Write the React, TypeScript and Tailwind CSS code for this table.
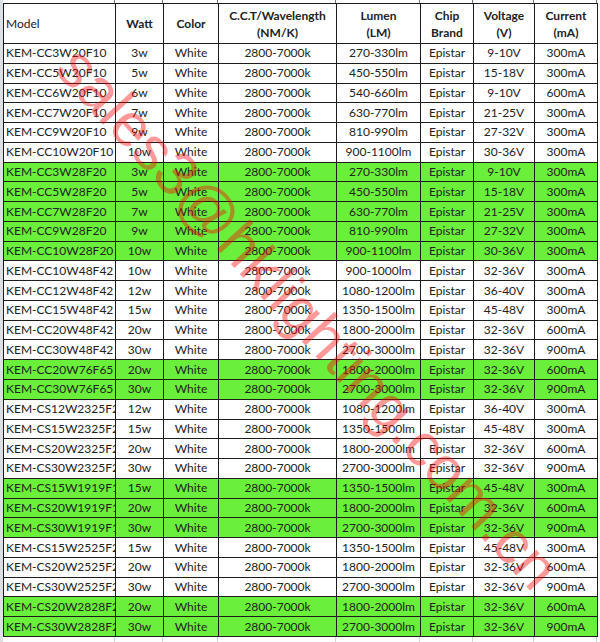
import clsx from 'clsx'

type Row = {
  model: string
  watt: string
  lumen: string
  voltage: string
  current: string
  green?: boolean
}

const rows: Row[] = [
  { model: 'KEM-CC3W20F10', watt: '3w', lumen: '270-330lm', voltage: '9-10V', current: '300mA' },
  { model: 'KEM-CC5W20F10', watt: '5w', lumen: '450-550lm', voltage: '15-18V', current: '300mA' },
  { model: 'KEM-CC6W20F10', watt: '6w', lumen: '540-660lm', voltage: '9-10V', current: '600mA' },
  { model: 'KEM-CC7W20F10', watt: '7w', lumen: '630-770lm', voltage: '21-25V', current: '300mA' },
  { model: 'KEM-CC9W20F10', watt: '9w', lumen: '810-990lm', voltage: '27-32V', current: '300mA' },
  { model: 'KEM-CC10W20F10', watt: '10w', lumen: '900-1100lm', voltage: '30-36V', current: '300mA' },
  { model: 'KEM-CC3W28F20', watt: '3w', lumen: '270-330lm', voltage: '9-10V', current: '300mA', green: true },
  { model: 'KEM-CC5W28F20', watt: '5w', lumen: '450-550lm', voltage: '15-18V', current: '300mA', green: true },
  { model: 'KEM-CC7W28F20', watt: '7w', lumen: '630-770lm', voltage: '21-25V', current: '300mA', green: true },
  { model: 'KEM-CC9W28F20', watt: '9w', lumen: '810-990lm', voltage: '27-32V', current: '300mA', green: true },
  { model: 'KEM-CC10W28F20', watt: '10w', lumen: '900-1100lm', voltage: '30-36V', current: '300mA', green: true },
  { model: 'KEM-CC10W48F42', watt: '10w', lumen: '900-1000lm', voltage: '32-36V', current: '300mA' },
  { model: 'KEM-CC12W48F42', watt: '12w', lumen: '1080-1200lm', voltage: '36-40V', current: '300mA' },
  { model: 'KEM-CC15W48F42', watt: '15w', lumen: '1350-1500lm', voltage: '45-48V', current: '300mA' },
  { model: 'KEM-CC20W48F42', watt: '20w', lumen: '1800-2000lm', voltage: '32-36V', current: '600mA' },
  { model: 'KEM-CC30W48F42', watt: '30w', lumen: '2700-3000lm', voltage: '32-36V', current: '900mA' },
  { model: 'KEM-CC20W76F65', watt: '20w', lumen: '1800-2000lm', voltage: '32-36V', current: '600mA', green: true },
  { model: 'KEM-CC30W76F65', watt: '30w', lumen: '2700-3000lm', voltage: '32-36V', current: '900mA', green: true },
  { model: 'KEM-CS12W2325F20', watt: '12w', lumen: '1080-1200lm', voltage: '36-40V', current: '300mA' },
  { model: 'KEM-CS15W2325F20', watt: '15w', lumen: '1350-1500lm', voltage: '45-48V', current: '300mA' },
  { model: 'KEM-CS20W2325F20', watt: '20w', lumen: '1800-2000lm', voltage: '32-36V', current: '600mA' },
  { model: 'KEM-CS30W2325F20', watt: '30w', lumen: '2700-3000lm', voltage: '32-36V', current: '900mA' },
  { model: 'KEM-CS15W1919F18', watt: '15w', lumen: '1350-1500lm', voltage: '45-48V', current: '300mA', green: true },
  { model: 'KEM-CS20W1919F18', watt: '20w', lumen: '1800-2000lm', voltage: '32-36V', current: '600mA', green: true },
  { model: 'KEM-CS30W1919F18', watt: '30w', lumen: '2700-3000lm', voltage: '32-36V', current: '900mA', green: true },
  { model: 'KEM-CS15W2525F23', watt: '15w', lumen: '1350-1500lm', voltage: '45-48V', current: '300mA' },
  { model: 'KEM-CS20W2525F23', watt: '20w', lumen: '1800-2000lm', voltage: '32-36V', current: '600mA' },
  { model: 'KEM-CS30W2525F23', watt: '30w', lumen: '2700-3000lm', voltage: '32-36V', current: '900mA' },
  { model: 'KEM-CS20W2828F25', watt: '20w', lumen: '1800-2000lm', voltage: '32-36V', current: '600mA', green: true },
  { model: 'KEM-CS30W2828F25', watt: '30w', lumen: '2700-3000lm', voltage: '32-36V', current: '900mA', green: true },
]

const cols = 'grid grid-cols-[112px_48px_55px_118px_84px_53px_61px_63px]'
const cell = 'flex items-center justify-center border-r border-[#1c1c1c] overflow-hidden whitespace-nowrap'

// empty strip with only the column lines (the sheet goes on above / below)
function Strip({ h, line }: { h: string; line: string }) {
  return (
    <div className={clsx(cols, h)}>
      {Array.from({ length: 8 }).map((_, i) => (
        <div key={i} className={clsx('border-r', line)} />
      ))}
    </div>
  )
}

export default function App() {
  return (
    <div
      className="relative w-[600px] h-[642px] overflow-hidden bg-white text-[12px] text-[#222]"
      style={{ fontFamily: 'Lato, "Liberation Sans", sans-serif' }}
    >
      <div className="flex">
        <div className="w-[3px] h-[642px] bg-[#dcdfe4]" />
        <div className="flex flex-col">
          <Strip h="h-[3px]" line="border-[#777]" />

          <div className="border-l border-t border-[#1c1c1c]">
            {/* header */}
            <div className={clsx(cols, 'h-[40px] border-b border-[#1c1c1c] leading-[17px]')}>
              <div className={clsx(cell, 'justify-start pl-[2px]')}>Model</div>
              <div className={clsx(cell, 'font-bold')}>Watt</div>
              <div className={clsx(cell, 'font-bold')}>Color</div>
              <div className={clsx(cell, 'font-bold flex-col')}>
                <span>C.C.T/Wavelength</span>
                <span>(NM/K)</span>
              </div>
              <div className={clsx(cell, 'font-bold flex-col')}>
                <span>Lumen</span>
                <span>(LM)</span>
              </div>
              <div className={clsx(cell, 'font-bold flex-col')}>
                <span>Chip</span>
                <span>Brand</span>
              </div>
              <div className={clsx(cell, 'font-bold flex-col')}>
                <span>Voltage</span>
                <span>(V)</span>
              </div>
              <div className={clsx(cell, 'font-bold flex-col')}>
                <span>Current</span>
                <span>(mA)</span>
              </div>
            </div>

            {rows.map(r => (
              <div
                key={r.model}
                className={clsx(
                  cols,
                  'h-[19.77px] border-b border-[#1c1c1c]',
                  r.green ? 'bg-[#6af03a]' : 'bg-white'
                )}
              >
                <div className={clsx(cell, 'justify-start pl-[2px]')}>{r.model}</div>
                <div className={cell}>{r.watt}</div>
                <div className={cell}>White</div>
                <div className={cell}>2800-7000k</div>
                <div className={cell}>{r.lumen}</div>
                <div className={cell}>Epistar</div>
                <div className={cell}>{r.voltage}</div>
                <div className={cell}>{r.current}</div>
              </div>
            ))}
          </div>

          <Strip h="h-[8px]" line="border-[#d4d4d4]" />
        </div>
      </div>

      {/* watermark */}
      <div
        className="pointer-events-none absolute left-[308px] top-[318px] -translate-x-1/2 -translate-y-1/2 rotate-[47.5deg] whitespace-nowrap text-[61px] leading-none text-[#ff0000]/40"
        style={{ fontFamily: '"Liberation Sans", Arial, sans-serif' }}
      >
        sales3@hklighting.com.cn
      </div>
    </div>
  )
}
